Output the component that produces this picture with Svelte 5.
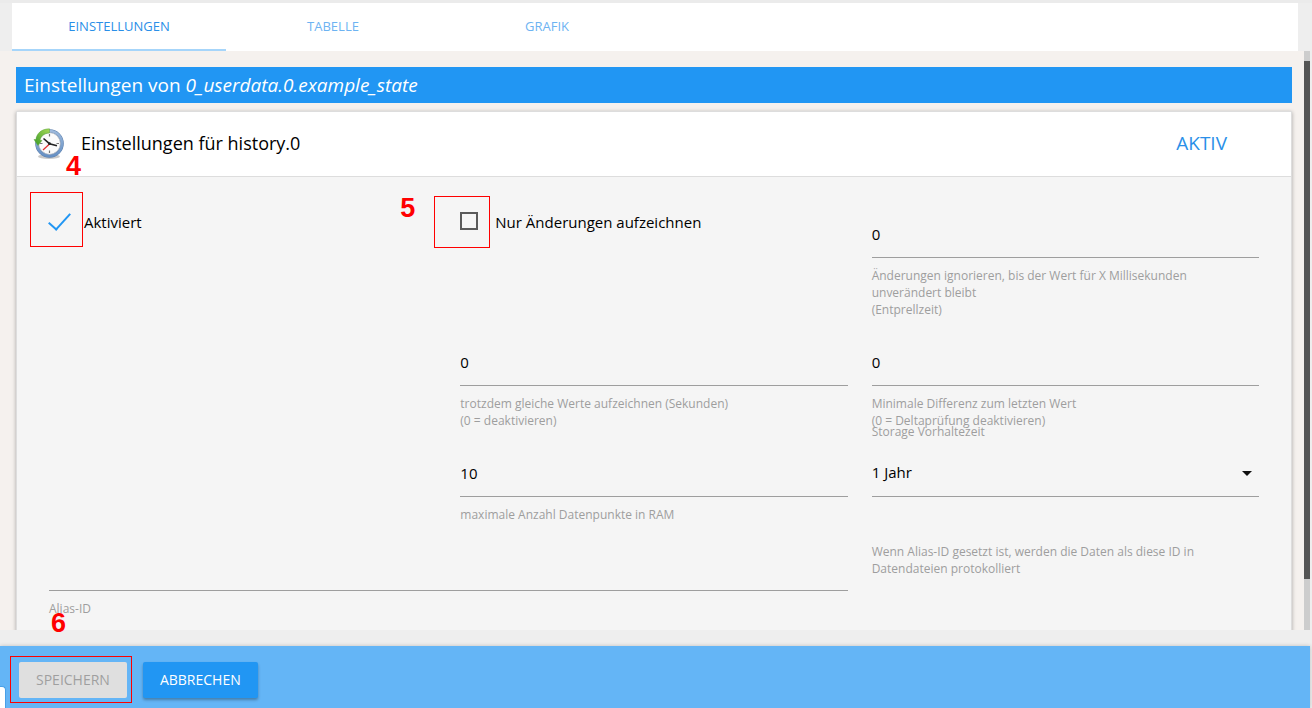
<script>
  const tabs = ['Einstellungen', 'Tabelle', 'Grafik'];
  let active = $state('Einstellungen');
  let enabled = $state(true);
  let changesOnly = $state(false);
  let debounce = $state('0');
  let relog = $state('0');
  let minDelta = $state('0');
  let maxLength = $state('10');
  let aliasId = $state('');
  let retention = $state('1 Jahr');
</script>

<div class="page">
  <nav class="tabs">
    {#each tabs as tab}
      <button class="tab" class:active={tab === active} onclick={() => (active = tab)}>{tab}</button>
    {/each}
  </nav>

  <div class="content">
    <main class="scroll">
      <h1>Einstellungen von&nbsp;<em>0_userdata.0.example_state</em></h1>

      <section class="card">
        <header>
          <svg class="clock" viewBox="0 0 32 32" aria-hidden="true">
            <defs>
              <linearGradient id="rim" x1="0" y1="0" x2="0" y2="1">
                <stop offset="0" stop-color="#9db9dc" />
                <stop offset="1" stop-color="#6690c4" />
              </linearGradient>
              <linearGradient id="leaf" x1="0" y1="1" x2="1" y2="0">
                <stop offset="0" stop-color="#3a9a26" />
                <stop offset="1" stop-color="#a5d957" />
              </linearGradient>
            </defs>
            <ellipse cx="16" cy="28.500" rx="11" ry="2.500" fill="#777" opacity="0.400" />
            <circle cx="16.500" cy="15.500" r="12.500" fill="#fbfbfb" stroke="#5c7fab" stroke-width="3.600" />
            <circle cx="16.500" cy="15.500" r="12.500" fill="none" stroke="url(#rim)" stroke-width="2.600" />
            <circle cx="16.500" cy="15.500" r="10.800" fill="none" stroke="#c5c9cf" stroke-width="0.800" />
            <path d="M16.500 6v2.500M16.500 22.500v2.500M23.500 15.500h2.500M7 15.500h2.500" stroke="#777" stroke-width="1.200" />
            <path d="M16.500 16l-6.500 6" stroke="#e03030" stroke-width="1.200" />
            <path d="M10.500 10.500l6 5.200 7.500 2" fill="none" stroke="#222" stroke-width="1.600" />
            <circle cx="16.500" cy="15.700" r="1.400" fill="#222" />
            <path d="M16.500 .8C8.500 .8 3.500 5.500 3 11.500L1 11.500 5 17.500 9 12.500 7 12C8 8 11.500 5.200 16.500 5Z" fill="url(#leaf)" stroke="#5aa53c" stroke-width=".5" />
          </svg>
          <h2>Einstellungen für history.0</h2>
          <span class="state">Aktiv</span>
        </header>

        <form class="grid">
          <label class="check">
            <input type="checkbox" bind:checked={enabled} />
            <span>Aktiviert</span>
            <i class="mark mark-enabled"><b>4</b></i>
          </label>

          <label class="check">
            <input type="checkbox" bind:checked={changesOnly} />
            <span>Nur Änderungen aufzeichnen</span>
            <i class="mark mark-changes"><b>5</b></i>
          </label>

          <div class="field">
            <input id="debounce" bind:value={debounce} />
            <label for="debounce">Änderungen ignorieren, bis der Wert für X Millisekunden unverändert bleibt<br />(Entprellzeit)</label>
          </div>

          <div class="field second">
            <input id="relog" bind:value={relog} />
            <label for="relog">trotzdem gleiche Werte aufzeichnen (Sekunden)<br />(0 = deaktivieren)</label>
          </div>

          <div class="field">
            <input id="delta" bind:value={minDelta} />
            <label for="delta">Minimale Differenz zum letzten Wert<br />(0 = Deltaprüfung deaktivieren)</label>
          </div>

          <div class="field second">
            <input id="ram" bind:value={maxLength} />
            <label for="ram">maximale Anzahl Datenpunkte in RAM</label>
          </div>

          <div class="field">
            <select id="retention" bind:value={retention}>
              <option>1 Jahr</option>
              <option>2 Jahre</option>
            </select>
            <svg class="caret" viewBox="0 0 10 5" aria-hidden="true"><path d="M0 0h10L5 5z" fill="#111" /></svg>
            <label class="above" for="retention">Storage Vorhaltezeit</label>
          </div>

          <div class="field wide">
            <input id="alias" bind:value={aliasId} />
            <label for="alias">Alias-ID</label>
          </div>

          <p class="hint">Wenn Alias-ID gesetzt ist, werden die Daten als diese ID in Datendateien protokolliert</p>
        </form>
      </section>
    </main>
    <div class="track"><div class="thumb"></div></div>
  </div>

  <footer>
    <div class="save">
      <button class="btn" disabled>Speichern</button>
      <i class="mark mark-save"><b>6</b></i>
    </div>
    <button class="btn primary">Abbrechen</button>
    <span class="corner"></span>
  </footer>
</div>

<style>
  :global(body) { margin: 0; background: #eee; }
  * { box-sizing: border-box; }
  .page {
    height: 100vh;
    display: flex;
    flex-direction: column;
    overflow: hidden;
    border-top: 3px solid #ebebeb;
    font-family: "Open Sans", "Noto Sans", sans-serif;
    font-size: 15px;
    color: #000;
  }
  button, input, select { font: inherit; }

  .tabs {
    display: flex;
    flex: none;
    height: 48px;
    margin: 0 14px 0 12px;
    background: #fff;
  }
  .tab {
    flex: 0 1 214px;
    padding: 0;
    border: 0;
    border-bottom: 2px solid transparent;
    background: none;
    color: #6db3f2;
    font-size: 13px;
    text-transform: uppercase;
  }
  .tab.active { color: #2a8fe8; border-color: #a6d5fa; }

  .content {
    flex: 1;
    min-height: 0;
    display: flex;
    margin: 0 2px 16px 0;
    background: #f5f1ee;
  }
  .scroll {
    flex: 1;
    overflow: auto;
    scrollbar-width: none;
    padding: 16px 12px 0 16px;
  }
  .track { width: 6px; padding-top: 10px; background: #cdcdcd; }
  .thumb { height: 91%; background: #555; }

  h1 {
    margin: 0 0 8px;
    padding: 0 8px;
    background: #2196f3;
    color: #fff;
    font-size: 19px;
    line-height: 36px;
    font-weight: 400;
  }
  .card {
    border: 1px solid #ddd;
    background: #f5f5f5;
    box-shadow: 0 1px 4px rgba(0, 0, 0, 0.32);
  }
  header {
    display: flex;
    align-items: center;
    height: 65px;
    padding: 0 64px 0 16px;
    border-bottom: 1px solid #ddd;
    background: #fff;
  }
  .clock { width: 32px; height: 32px; margin-right: 16px; }
  h2, .state { margin: 0; padding-bottom: 2px; font-weight: 400; }
  h2 { flex: 1; font-size: 18px; }
  .state { color: #2a8fe8; font-size: 19px; text-transform: uppercase; }

  .grid {
    display: grid;
    grid-template-columns: repeat(3, 1fr);
    gap: 20px 24px;
    padding: 33px 32px;
  }
  .second { grid-column: 2; }
  .wide { grid-column: span 2; }

  .check {
    position: relative;
    display: flex;
    align-items: center;
    justify-self: start;
    align-self: start;
    gap: 17px;
    height: 24px;
  }
  .check input {
    appearance: none;
    width: 18px;
    height: 18px;
    margin: 0 0 2px;
    border: 2px solid #5a5a5a;
  }
  .check input:checked {
    position: relative;
    border-color: transparent;
  }
  .check input:checked::after {
    content: "";
    position: absolute;
    left: 3px;
    top: -6px;
    width: 9px;
    height: 20px;
    border: solid #2196f3;
    border-width: 0 2px 2px 0;
    transform: rotate(42deg);
  }

  .field { position: relative; min-width: 0; }
  .field input, .field select {
    display: block;
    width: 100%;
    height: 48px;
    padding: 0;
    border: 0;
    border-bottom: 1px solid #9e9e9e;
    border-radius: 0;
    outline: 0;
    background: none;
    color: #000;
  }
  .field input { padding-bottom: 0; }
  .field select { appearance: none; padding-bottom: 2px; }
  .field label, .hint {
    display: block;
    margin: 9px 0 0;
    color: #9e9e9e;
    font-size: 12px;
    line-height: 17px;
  }
  .field label { padding-right: 40px; }
  .hint { margin: 0; padding-right: 40px; }
  .field .above { position: absolute; top: -26px; left: 0; margin: 0; }
  .caret { position: absolute; right: 7px; top: 22px; width: 10px; height: 5px; pointer-events: none; }

  footer {
    position: relative;
    display: flex;
    flex: none;
    align-items: center;
    gap: 16px;
    height: 62px;
    margin-right: 2px;
    padding: 6px 19px 0;
    background: #64b5f6;
    box-shadow: 0 0 4px rgba(0, 0, 0, 0.2);
  }
  .save { position: relative; }
  .btn {
    display: block;
    height: 36px;
    padding: 0 17px 2px;
    border: 0;
    border-radius: 2px;
    background: #dfdfdf;
    color: #9f9f9f;
    font-size: 14px;
    text-transform: uppercase;
  }
  .primary {
    background: #2196f3;
    color: #fff;
    box-shadow: 0 2px 3px rgba(0, 0, 0, 0.3);
  }
  .corner {
    position: absolute;
    left: 0;
    bottom: 0;
    width: 6px;
    height: 22px;
    border: 1px solid #4a9fe6;
    border-width: 1px 1px 0 0;
    border-radius: 0 4px 0 0;
    background: #fff;
  }

  /* Numbered step markers laid over the controls */
  .mark {
    position: absolute;
    border: 1px solid #f00;
    pointer-events: none;
  }
  .mark b {
    position: absolute;
    color: #f00;
    font: bold 27px/26px "Liberation Sans", sans-serif;
  }
  .mark-enabled { left: -19px; top: -18px; width: 53px; height: 55px; }
  .mark-enabled b { left: 35px; top: -40px; }
  .mark-changes { left: -26px; top: -14px; width: 56px; height: 52px; }
  .mark-changes b { left: -35px; top: -2px; }
  .mark-save { inset: -6px -5px -5px -9px; }
  .mark-save b { left: 40px; top: -47px; }
</style>
